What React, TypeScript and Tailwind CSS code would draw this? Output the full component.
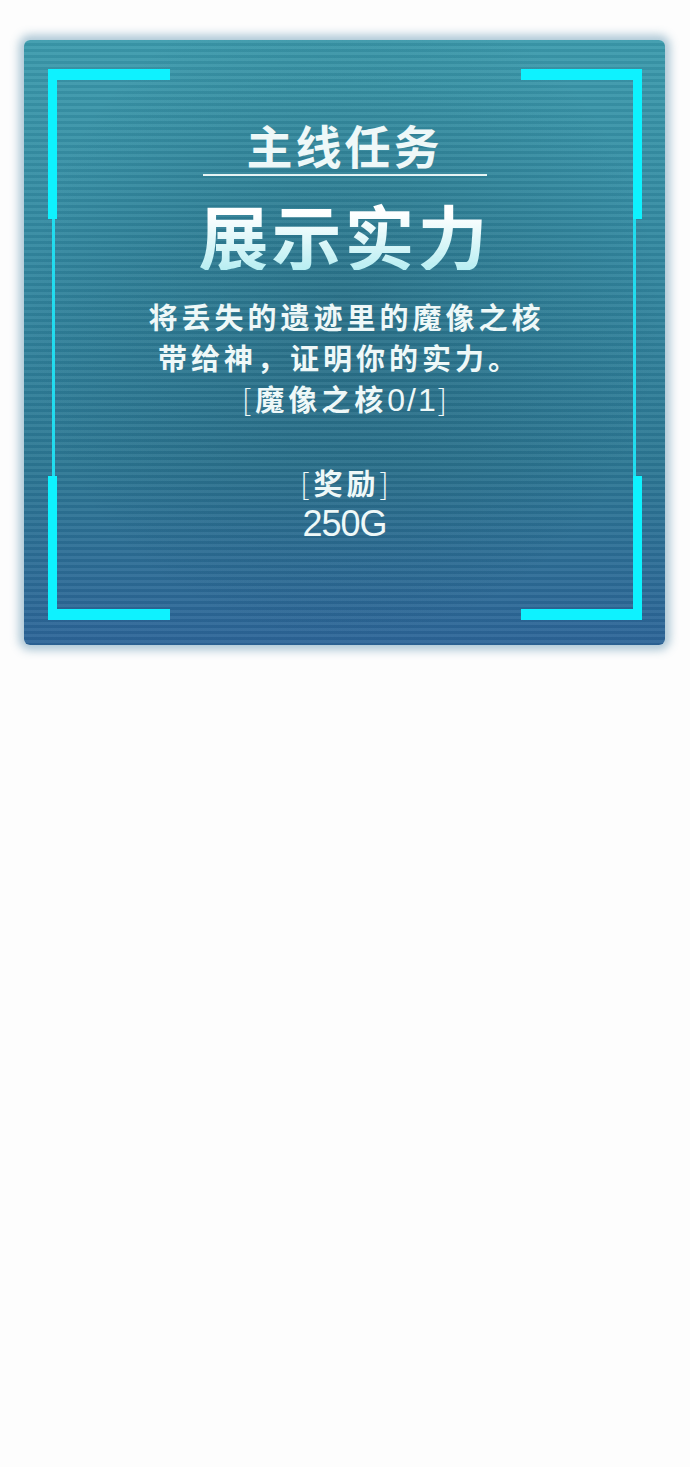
export default function App() {
  const cjk = { fontFamily: '"Noto Sans CJK SC", "Noto Sans", sans-serif' };
  const tech = { fontFamily: '"Liberation Sans", "DejaVu Sans", sans-serif' };

  return (
    <div className="min-h-[1467px] w-[690px] bg-[#fdfdfd] pt-[40px]">
      {/* quest panel */}
      <div className="relative ml-[24px] h-[605px] w-[641px] overflow-hidden rounded-[6px] bg-[linear-gradient(to_bottom,#3c9bad_0%,#3388a0_35%,#2d7894_70%,#2d6598_100%)] shadow-[0_0_10px_5px_rgba(70,130,165,0.45)]">
        {/* darker centre */}
        <div className="absolute inset-0 bg-[radial-gradient(ellipse_at_50%_45%,rgba(16,48,64,0.22)_0%,rgba(16,48,64,0)_70%)]" />
        {/* scanlines */}
        <div className="absolute inset-0 bg-[repeating-linear-gradient(to_bottom,rgba(255,255,255,0.05)_0px,rgba(255,255,255,0.05)_3px,rgba(0,20,40,0.06)_3px,rgba(0,20,40,0.06)_6px)]" />

        {/* corner brackets, left and right */}
        <div className="absolute bottom-[25px] left-[24px] top-[29px] flex w-[122px] flex-col">
          <div className="h-[150px] border-l-[9px] border-t-[11px] border-[#0ef2ff]" />
          <div className="ml-[4px] w-[3px] flex-1 bg-[#22dcef]" />
          <div className="h-[144px] border-b-[11px] border-l-[9px] border-[#0ef2ff]" />
        </div>
        <div className="absolute bottom-[25px] right-[23px] top-[29px] flex w-[121px] flex-col items-end">
          <div className="h-[150px] w-full border-r-[9px] border-t-[11px] border-[#0ef2ff]" />
          <div className="mr-[6px] w-[3px] flex-1 bg-[#22dcef]" />
          <div className="h-[144px] w-full border-b-[11px] border-r-[9px] border-[#0ef2ff]" />
        </div>

        {/* text */}
        <div className="relative flex flex-col items-center pt-[81px] text-[#eef8f8]" style={cjk}>
          <div className="text-[46px] font-bold leading-[46px] tracking-[3px]">主线任务</div>
          <div className="mt-[7px] h-[2px] w-[284px] bg-[#e6f4f4]" />
          <div className="mt-[24px] bg-[linear-gradient(to_bottom,#ffffff_20%,#b8eef2_100%)] bg-clip-text text-[70px] font-bold leading-[70px] tracking-[3px] text-transparent">
            展示实力
          </div>

          <div className="mt-[26px] flex flex-col items-center text-[29px] leading-[41px] tracking-[4px]">
            <div className="pl-[4px] font-bold">将丢失的遗迹里的魔像之核</div>
            <div className="pr-[10px] font-bold">带给神，证明你的实力。</div>
            <div className="pl-[4px]">
              <span className="font-light">[</span>
              <span className="font-bold">魔像之核</span>
              <span className="text-[32px] font-normal tracking-[2px]" style={tech}>0/1</span>
              <span className="font-light">]</span>
            </div>
            <div className="h-[41px]" />
            <div className="pl-[4px]">
              <span className="font-light">[</span>
              <span className="font-bold">奖励</span>
              <span className="font-light">]</span>
            </div>
            <div className="text-[36px] tracking-[-1px]" style={tech}>
              250G
            </div>
          </div>
        </div>
      </div>
    </div>
  );
}
